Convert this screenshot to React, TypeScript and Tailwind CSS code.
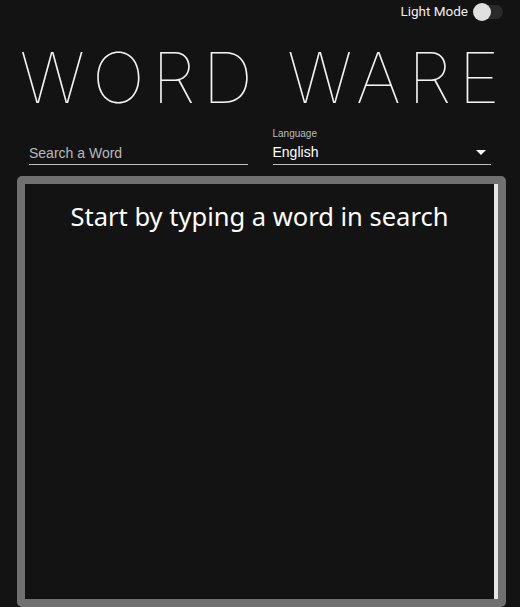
export default function App() {
  return (
    <div className="w-[520px] h-[607px] overflow-hidden bg-[#131313] text-white" style={{ fontFamily: "Roboto, 'Liberation Sans', sans-serif" }}>
      {/* top bar */}
      <div className="flex justify-end items-center h-[24px] pr-[17px] gap-[7px]">
        <span className="text-[13.5px] leading-none text-[#eeeeee]">Light Mode</span>
        <div className="relative w-[28px] h-[14px] rounded-full bg-[#2a2a2a]">
          <div className="absolute left-[-2px] top-[-2px] w-[18px] h-[18px] rounded-full bg-[#e0e0e0]" />
        </div>
      </div>

      <h1
        className="text-center text-[70px] leading-none font-thin tracking-[7.5px] pl-[7px] mt-[19px] text-[#f4f4f4]"
        style={{ fontFamily: "Inter, 'Open Sans', sans-serif" }}
      >
        WORD WARE
      </h1>

      <div className="flex px-[29px] gap-[25px] mt-[17px]">
        <div className="w-[220px] border-b border-[#bdbdbd] h-[35px] flex items-end pb-[4px]">
          <span className="text-[14px] leading-none text-[#b9b9b9]" style={{ fontFamily: "'Liberation Sans', Arial, sans-serif" }}>Search a Word</span>
        </div>
        <div className="w-[220px] border-b border-[#bdbdbd] h-[35px] flex flex-col justify-end pb-[5px]" style={{ fontFamily: "'Liberation Sans', Arial, sans-serif" }}>
          <span className="text-[10px] leading-none text-[#bdbdbd] mb-[6px]">Language</span>
          <div className="flex items-center justify-between">
            <span className="text-[14px] leading-none">English</span>
            <svg width="10" height="5" viewBox="0 0 10 5" className="mr-[5px]">
              <path d="M0 0 L10 0 L5 5 Z" fill="#ffffff" />
            </svg>
          </div>
        </div>
      </div>

      <div className="ml-[17px] mr-[14px] mt-[11px] h-[431px] border-8 border-[#707070] rounded-[5px] bg-[#131313] flex">
        <div className="flex-1 text-center pt-[13px]">
          <p className="text-[25.5px] text-white" style={{ fontFamily: "'Noto Sans', 'Open Sans', sans-serif" }}>
            Start by typing a word in search
          </p>
        </div>
        <div className="w-[4px] bg-[#e6e6e6]" />
      </div>
    </div>
  );
}
